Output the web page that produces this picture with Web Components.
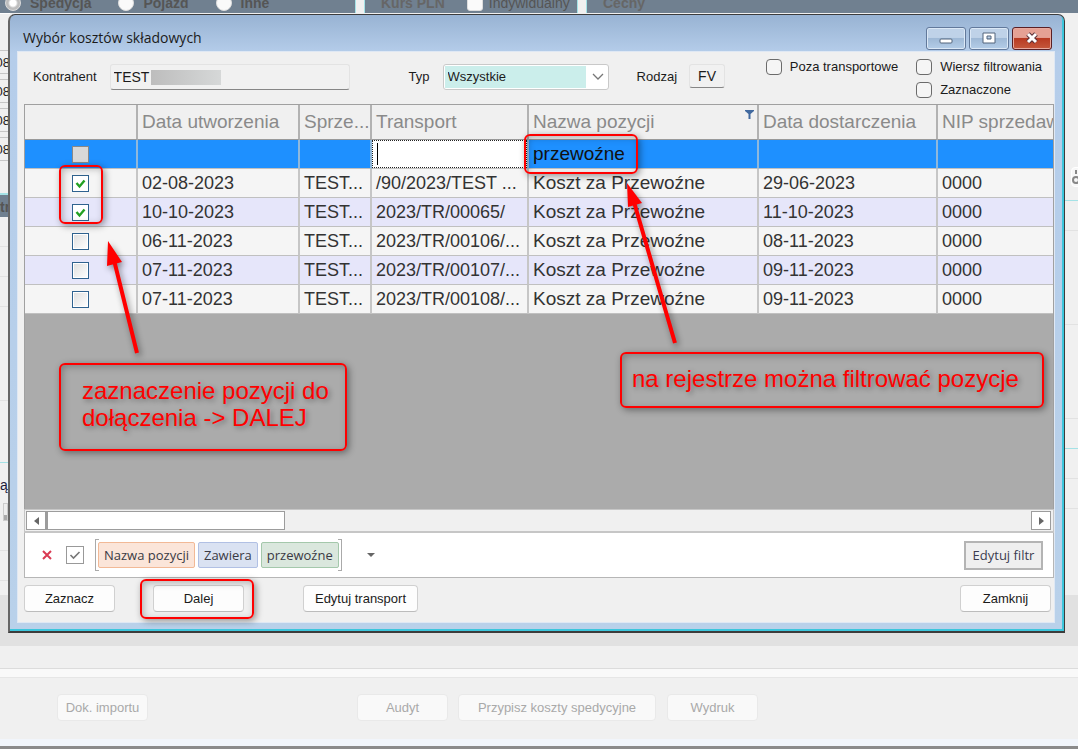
<!DOCTYPE html>
<html lang="pl">
<head>
<meta charset="utf-8">
<meta name="viewport" content="width=device-width, initial-scale=1">
<title>Wybór kosztów składowych</title>
<style>
  html, body { margin: 0; min-height: 100%; background: #f0f0f0; }
  body { font: 13px/16px "Liberation Sans", Arial, sans-serif; color: #1b1b1b; overflow: hidden; }
</style>
</head>
<body>
<costs-screen></costs-screen>

<script>
const define = (name, html, setup) => {
  const template = document.createElement('template');
  template.innerHTML = html;
  customElements.define(name, class extends HTMLElement {
    constructor() {
      super();
      this.attachShadow({ mode: 'open' }).append(template.content.cloneNode(true));
    }
    connectedCallback() { if (setup) setup(this, this.shadowRoot); }
  });
};

/* Push button; kind="flat" for the square one, "off" for disabled */
define('ui-button', `
<style>
  :host { display: block; }
  button { box-sizing: border-box; width: 100%; min-width: 91px; height: 27px; padding: 0 7px; font: inherit; color: #1b1b1b;
    background: #fdfdfd; border: 1px solid #d0d0d0; border-bottom-color: #bcbcbc; border-radius: 4px; white-space: nowrap; }
  button:disabled { color: #a9a9a9; background: #f9f9f9; border-color: #e9e9e9; }
  :host([kind=flat]) button { min-width: 79px; height: 29px; padding: 0 5px; border: 2px solid #b4b4b4; border-radius: 0; background: #efefef; color: #3c3c50; }
</style>
<button type="button"><slot></slot></button>`, (host, root) => {
  root.querySelector('button').disabled = host.hasAttribute('off');
});

define('ui-check', `
<style>
  :host { display: block; }
  label { display: flex; align-items: center; gap: 8px; white-space: nowrap; }
  input { appearance: none; box-sizing: border-box; width: 16px; height: 16px; margin: 0; border: 1px solid #6b6b6b; border-radius: 4px; background: #f5f5f5; }
</style>
<label><input type="checkbox"><slot></slot></label>`);

/* Toolbar of the window behind the dialog */
define('order-toolbar', `
<style>
  :host { display: grid; grid-template-columns: 356px 214px 1fr; gap: 8px; height: 13px; overflow: hidden; color: #555; font-size: 14px; }
  .group { display: flex; align-items: flex-end; box-sizing: border-box; height: 13px; background: #708090; border-right: 1px solid #a4e2e6; overflow: hidden; }
  .group + .group { border-left: 1px solid #a4e2e6; }
  .group:last-child { border-right: 0; }
  label, b { display: flex; align-items: center; gap: 9px; height: 20px; white-space: nowrap; }
  b, .bold { font-weight: bold; }
  input { appearance: none; box-sizing: border-box; width: 16px; height: 16px; margin: 0; background: #fafafa; border: 1px solid #ddd; border-radius: 3px; }
  [type=radio] { border-radius: 50%; }
  [type=radio]:checked { background: radial-gradient(#fff 3px, #bdbdbd 5px); }
  .first { padding-left: 5px; gap: 27px; }
  .second { padding-left: 16px; gap: 22px; }
  .second label { gap: 6px; }
  .third { padding-left: 16px; }
  .pale { color: #666; }
</style>
<div class="group first">
  <label class="bold"><input type="radio" name="kind" checked>Spedycja</label>
  <label class="bold"><input type="radio" name="kind">Pojazd</label>
  <label class="bold"><input type="radio" name="kind">Inne</label>
</div>
<div class="group second"><b class="pale">Kurs PLN</b><label><input type="checkbox">Indywidualny</label></div>
<div class="group third"><b class="pale">Cechy</b></div>`);

/* Slivers of the form that show on both sides of the dialog */
define('order-edges', `
<style>
  :host { display: flex; justify-content: space-between; height: 582px; }
  .side { overflow: hidden; display: flex; flex-direction: column; white-space: nowrap; }
  .left { width: 10px; border-top: 1px solid #fff; padding-top: 36px; box-sizing: border-box; }
  .right { width: 13px; }
  .field { display: flex; justify-content: flex-end; box-sizing: border-box; height: 24px; flex: none; margin-bottom: 5px; border: 1px solid #c6c6c6; border-width: 1px 0; line-height: 24px; color: #222; font-size: 13px; }
  .head { height: 22px; flex: none; background: #708090; color: #555; font: bold 14px/24px "Liberation Sans", sans-serif; border-top: 2px solid #a4e2e6; margin-top: 27px; }
  .gap { box-sizing: border-box; border-bottom: 1px solid #e2e2e2; flex: none; }
  .h30 { height: 30px; }
  .h62 { height: 62px; }
  .h94 { height: 94px; }
  .teal { border-bottom-color: #a4e2e6; }
  .label { color: #1b1b3c; font-size: 14px; line-height: 44px; height: 40px; flex: none; }
  .btn { width: 5px; height: 18px; align-self: flex-end; flex: none; background: linear-gradient(#eee 70%, #aaa 70%); border: 1px solid #ccc; box-sizing: border-box; margin-right: 2px; }
  .tool { display: flex; align-items: center; width: 26px; height: 18px; margin: 154px 0 13px 6px; border: 1px solid #fff; border-radius: 4px; background: #f7f7f7; flex: none; }
</style>
<div class="side left">
  <div class="field">08</div><div class="field">08</div><div class="field">08</div><div class="field">08</div>
  <div class="head">tr</div>
  <div class="gap h30"></div><div class="gap h30"></div><div class="gap h30"></div>
  <div class="gap h94"></div><div class="gap h62 teal"></div>
  <div class="label">ą</div><div class="btn"></div>
  <div class="gap h30"></div><div class="gap h30"></div>
</div>
<div class="side right">
  <div class="tool"><svg width="14" height="16" viewBox="0 0 14 16" fill="none" stroke="#888" stroke-width="2"><path d="M4 1v4M8 1v4"/><circle cx="4" cy="11" r="3"/><circle cx="10" cy="12" r="2"/></svg></div>
  <div class="gap teal"></div>
  <div class="gap h30"></div>
  <div class="gap h94"></div><div class="gap h94"></div>
  <div class="gap h30 teal"></div><div class="gap h30"></div><div class="gap h30"></div>
</div>`);

define('order-footer', `
<style>
  :host { display: block; background: #e1e1e1; padding-top: 51px; }
  .band { height: 22px; background: #f0f0f0; border-bottom: 1px solid #dcdcdc; }
  .light { height: 8px; background: #f9f9f9; border-bottom: 1px solid #e6e6e6; }
  .row { display: flex; background: #f0f0f0; padding: 16px 57px 18px; height: 27px; }
  .audit { margin-left: 209px; }
  .assign { margin-left: 10px; width: 198px; }
  .print { margin-left: 11px; }
  .end { height: 7px; background: #f1f5fb; border-bottom: 3px solid #8b8b8b; }
</style>
<div class="band"></div><div class="light"></div>
<div class="row">
  <ui-button off>Dok. importu</ui-button>
  <ui-button off class="audit">Audyt</ui-button>
  <ui-button off class="assign">Przypisz koszty spedycyjne</ui-button>
  <ui-button off class="print">Wydruk</ui-button>
</div>
<div class="end"></div>`);

define('dialog-title', `
<style>
  :host { display: flex; align-items: center; height: 36px; padding: 0 2px 0 5px; font: 14px/18px "Open Sans", "Noto Sans", sans-serif; }
  h1 { flex: 1; margin: 8px 0 0; font: inherit; }
  div { display: flex; gap: 3px; margin-top: 8px; }
  button { box-sizing: border-box; width: 40px; height: 23px; padding: 0; display: grid; place-items: center;
    border: 1px solid #62799b; border-radius: 3px; box-shadow: inset 0 0 0 1px #dbe8f6; background: linear-gradient(#bfd2e8 45%, #9fb9d6 50%, #b4cde8); }
  .close { border-color: #5a1f24; box-shadow: inset 0 0 0 1px #e8a99f; background: linear-gradient(#e5a194 45%, #b83a22 50%, #c5583d); }
</style>
<h1>Wybór kosztów składowych</h1>
<div>
  <button type="button" aria-label="Minimalizuj"><svg width="16" height="14"><rect x="2" y="8" width="12" height="4" rx="1" fill="#fff" stroke="#53657c"/></svg></button>
  <button type="button" aria-label="Maksymalizuj"><svg width="16" height="14"><path fill="#fff" fill-rule="evenodd" stroke="#53657c" d="M2 2h12v10H2zM6 5h4v3H6z"/></svg></button>
  <button type="button" class="close" aria-label="Zamknij okno"><svg width="16" height="14"><path d="M4 3l8 8M12 3l-8 8" stroke="#5a3038" stroke-width="5"/><path d="M4 3l8 8M12 3l-8 8" stroke="#fff" stroke-width="3"/></svg></button>
</div>`);

define('cost-criteria', `
<style>
  :host { display: flex; align-items: flex-start; height: 52px; padding: 0 12px 0 15px; box-sizing: border-box; }
  label { line-height: 26px; margin-top: 12px; white-space: nowrap; }
  .field { display: flex; align-items: center; box-sizing: border-box; height: 26px; margin-top: 12px; border: 1px solid #e3e3e3; border-bottom: 1px solid #868686; border-radius: 3px; background: #f1f1f1; }
  input, select { font: inherit; font-size: 14px; color: inherit; border: 0; background: none; padding: 0; margin: 0; min-width: 0; }
  .party { width: 240px; margin-left: 13px; padding-left: 3px; }
  .party input { width: 37px; }
  .mask { width: 70px; height: 15px; background: linear-gradient(90deg, #bdbdbd, #d6d8d8); }
  .type { width: 166px; margin-left: 13px; padding: 1px; border-color: #c9c9c9; background: #fff; position: relative; }
  select { appearance: none; width: 100%; height: 22px; padding-left: 3px; background: linear-gradient(90deg, #cbeeeb 141px, #fff 141px); font-size: 13px; }
  .type svg { position: absolute; right: 4px; top: 8px; pointer-events: none; }
  .kind { width: 36px; height: 24px; margin-left: 12px; }
  .kind input { width: 34px; text-align: center; }
  .t { margin-left: 59px; }
  .r { margin-left: 28px; }
  .checks { display: grid; grid-template-columns: auto auto; gap: 7px 18px; margin: 7px 0 0 auto; }
  .checks ui-check:last-child { grid-column: 2; }
</style>
<label for="party">Kontrahent</label>
<div class="field party"><input id="party" value="TEST"><span class="mask"></span></div>
<label class="t" for="type">Typ</label>
<div class="field type"><select id="type"><option>Wszystkie</option></select><svg width="12" height="8" fill="none" stroke="#777" stroke-width="1.3"><path d="M1 1l5 5 5-5"/></svg></div>
<label class="r" for="kind">Rodzaj</label>
<div class="field kind"><input id="kind" value="FV"></div>
<div class="checks"><ui-check>Poza transportowe</ui-check><ui-check>Wiersz filtrowania</ui-check><ui-check>Zaznaczone</ui-check></div>`);

define('cost-grid', `
<style>
  :host { display: block; min-height: 405px; box-sizing: border-box; background: #ababab; border: 1px solid #a0a0a0; border-bottom: 0; overflow: hidden; font-size: 18px; color: #333; }
  table { width: 100%; table-layout: fixed; border-collapse: separate; border-spacing: 0; }
  .c0 { width: 113px; } .c1 { width: 162px; } .c2 { width: 72px; } .c3 { width: 157px; } .c4 { width: 230px; } .c5 { width: 179px; }
  th, td { box-sizing: border-box; padding: 0 0 0 4px; text-align: left; font-weight: normal; white-space: nowrap; overflow: hidden; border-right: 2px solid #c6c6c6; border-bottom: 1px solid #c0c0c0; }
  th:last-child, td:last-child { border-right: 0; }
  th { height: 35px; font-size: 19px; color: #8a8a8a; background: #f0f0f0; border-right-color: #b2b2b2; border-bottom-color: #999; position: relative; }
  th svg { position: absolute; right: 3px; top: 5px; }
  td { height: 29px; background: #f5f5f5; line-height: 28px; }
  td:nth-child(5) { font-size: 19px; }
  td:first-child { padding: 0; }
  tbody tr:nth-child(odd) td { background: #e6e6fa; }
  tbody tr.filter td { background: #1e90ff; color: #111; border-right-color: #8fb8dc; }
  .filter input[type=text] { box-sizing: border-box; display: block; width: 100%; height: 28px; padding: 0 4px; margin: 0; border: 1px dotted #222; background: #fff; font: inherit; outline: 0; }
  tbody tr.filter td.edit { padding: 0; background: #fff; }
  .edit div { display: grid; align-items: center; }
  .edit input, .caret { grid-area: 1 / 1; }
  .caret { width: 1px; height: 22px; margin-left: 5px; background: #000; }
  [type=checkbox] { appearance: none; box-sizing: border-box; display: block; width: 17px; height: 17px; margin: 0 auto; border: 1px solid #2f628f; background: linear-gradient(135deg, #dedede, #fff); box-shadow: inset 0 0 0 1px #fff; }
  .filter [type=checkbox] { border-color: #888; background: #d8d8d8; box-shadow: none; }
  [type=checkbox]:checked { background: #fff url("data:image/svg+xml,%3Csvg xmlns='http://www.w3.org/2000/svg' viewBox='0 0 15 15'%3E%3Cpath d='M3.5 7l3 3.500 5-6' fill='none' stroke='%2322a022' stroke-width='2.400'/%3E%3C/svg%3E"); }
</style>
<table>
  <colgroup><col class="c0"><col class="c1"><col class="c2"><col class="c3"><col class="c4"><col class="c5"><col></colgroup>
  <thead><tr><th></th><th>Data utworzenia</th><th>Sprze...</th><th>Transport</th>
    <th>Nazwa pozycji<svg width="9" height="9" fill="#41699f"><path d="M0 0h9v1L5.500 4v5h-2V4L0 1z"/></svg></th>
    <th>Data dostarczenia</th><th>NIP sprzedawcy</th></tr></thead>
  <tbody>
    <tr class="filter"><td><input type="checkbox" aria-label="Zaznaczone"></td><td></td><td></td>
      <td class="edit"><div><input type="text" aria-label="Transport"><span class="caret"></span></div></td><td>przewoźne</td><td></td><td></td></tr>
  </tbody>
</table>`, (host, root) => {
  const rows = [
    [true, '02-08-2023', '/90/2023/TEST ...', '29-06-2023'],
    [true, '10-10-2023', '2023/TR/00065/', '11-10-2023'],
    [false, '06-11-2023', '2023/TR/00106/...', '08-11-2023'],
    [false, '07-11-2023', '2023/TR/00107/...', '09-11-2023'],
    [false, '07-11-2023', '2023/TR/00108/...', '09-11-2023']
  ];
  root.querySelector('tbody').insertAdjacentHTML('beforeend', rows.map(([on, made, transport, due]) =>
    `<tr><td><input type="checkbox" aria-label="Wybierz" ${on ? 'checked' : ''}></td><td>${made}</td><td>TEST...</td><td>${transport}</td><td>Koszt za Przewoźne</td><td>${due}</td><td>0000</td></tr>`).join(''));
});

define('grid-scrollbar', `
<style>
  :host { display: flex; box-sizing: border-box; height: 24px; padding: 1px 2px 1px 1px; background: #f0f0f0; border: 1px solid #c6c6c6; border-bottom-width: 2px; }
  button, .thumb { box-sizing: border-box; border: 1px solid #9c9c9c; background: #fff; height: 19px; padding: 0; }
  button { display: grid; place-items: center; width: 20px; flex: none; }
  .thumb { flex: none; width: 239px; border-left-width: 2px; }
  button:last-child { margin-left: auto; }
</style>
<button type="button" aria-label="W lewo"><svg width="5" height="8" fill="#666"><path d="M5 0v8L0 4z"/></svg></button>
<div class="thumb"></div>
<button type="button" aria-label="W prawo"><svg width="5" height="8" fill="#666"><path d="M0 0v8l5-4z"/></svg></button>`);

define('filter-bar', `
<style>
  :host { display: flex; align-items: center; box-sizing: border-box; height: 45px; padding: 0 10px 0 17px; background: #fff; border: 1px solid #b6b6b6; border-top: 0; color: #3c3c50; font-family: "Open Sans", "Noto Sans", sans-serif; }
  .drop, .more { border: 0; background: none; padding: 0; display: grid; }
  [type=checkbox] { appearance: none; box-sizing: border-box; width: 18px; height: 18px; margin: 0 11px 0 14px; border: 1px solid #999;
    background: url("data:image/svg+xml,%3Csvg xmlns='http://www.w3.org/2000/svg' viewBox='0 0 16 16'%3E%3Cpath d='M3.500 8l3 3 6-6' fill='none' stroke='%23777' stroke-width='1.600'/%3E%3C/svg%3E"); }
  .cond { display: flex; align-items: center; gap: 3px; height: 32px; padding: 0 3px; position: relative; }
  .cond::before, .cond::after { content: ""; position: absolute; top: 0; bottom: 0; width: 4px; border: 1px solid #aaa; box-sizing: border-box; }
  .cond::before { left: 0; border-right: 0; }
  .cond::after { right: 0; border-left: 0; }
  .chip { box-sizing: border-box; height: 26px; padding: 0 5px; border: 1px solid; border-radius: 2px; font: inherit; line-height: 24px; color: #3a3a44; white-space: nowrap; position: relative; z-index: 1; }
  .name { background: #fbe5d9; border-color: #f2b996; }
  .op { background: #dae2f2; border-color: #b1c0e4; }
  .val { background: #dae7dd; border-color: #a4c8ab; }
  .more { margin-left: 25px; }
  ui-button { margin-left: auto; }
</style>
<button type="button" class="drop" aria-label="Usuń filtr"><svg width="10" height="10" stroke="#d93a52" stroke-width="2"><path d="M1 1l8 8M9 1l-8 8"/></svg></button>
<input type="checkbox" aria-label="Filtr włączony">
<div class="cond"><button class="chip name">Nazwa pozycji</button><button class="chip op">Zawiera</button><button class="chip val">przewoźne</button></div>
<button type="button" class="more" aria-label="Ostatnie filtry"><svg width="8" height="4" fill="#666"><path d="M0 0h8L4 4z"/></svg></button>
<ui-button kind="flat">Edytuj filtr</ui-button>`);

define('dialog-actions', `
<style>
  :host { display: flex; padding: 7px 3px 10px 0; }
  .next { margin-left: 38px; }
  .edit { margin-left: 59px; width: 115px; }
  .close { margin-left: auto; }
</style>
<ui-button>Zaznacz</ui-button><ui-button class="next">Dalej</ui-button><ui-button class="edit">Edytuj transport</ui-button><ui-button class="close">Zamknij</ui-button>`);

define('costs-dialog', `
<style>
  :host { display: block; border: 1px solid #3c3c3c; border-left: 2px solid #666; border-bottom-width: 2px; border-radius: 7px 7px 0 0;
    background: linear-gradient(#98b3d3, #b5cdea 38px, #b9d1ea); box-shadow: inset -2px -2px 0 #3cc6dc; padding: 1px 10px 9px 8px; }
  .body { background: #f0f0f0; box-shadow: 0 0 0 1px #dfe8f4; }
  .main { padding: 0 0 0 6px; }
</style>
<dialog-title></dialog-title>
<div class="body">
  <cost-criteria></cost-criteria>
  <div class="main"><cost-grid></cost-grid><grid-scrollbar></grid-scrollbar><filter-bar></filter-bar><dialog-actions></dialog-actions></div>
</div>`);

/* Red frame with an optional note, placed over the window */
define('call-out', `
<style>
  :host { display: block; position: absolute; box-sizing: border-box; border: 2px solid #f00; border-radius: 6px;
    box-shadow: 2px 2px 7px rgba(0,0,0,.4), inset 2px 2px 7px rgba(0,0,0,.25);
    font: 24px/27px "Liberation Sans", Arial, sans-serif; color: #f00; text-shadow: 2px 2px 5px rgba(0,0,0,.35); }
</style>
<slot></slot>`);

define('costs-screen', `
<style>
  :host { display: block; position: relative; min-height: 100vh; background: #f0f0f0; }
  costs-dialog { position: absolute; top: 14px; left: 8px; right: 13px; }
  .rows { left: 59px; top: 165px; width: 44px; height: 59px; }
  .value { left: 524px; top: 134px; width: 114px; height: 40px; }
  .next { left: 140px; top: 579px; width: 114px; height: 40px; }
  .pick { left: 59px; top: 363px; width: 288px; height: 88px; padding: 12px 12px 12px 21px; }
  .find { left: 620px; top: 352px; width: 424px; height: 56px; padding: 11px 10px; white-space: nowrap; }
  .arrows { position: absolute; left: 0; top: 0; width: 700px; height: 400px; pointer-events: none; filter: drop-shadow(2px 3px 3px rgba(0,0,0,.45)); }
</style>
<order-toolbar></order-toolbar>
<order-edges></order-edges>
<order-footer></order-footer>
<costs-dialog></costs-dialog>
<call-out class="rows"></call-out>
<call-out class="value"></call-out>
<call-out class="next"></call-out>
<call-out class="pick">zaznaczenie pozycji do<br>dołączenia -&gt; DALEJ</call-out>
<call-out class="find">na rejestrze można filtrować pozycje</call-out>
<svg class="arrows" viewBox="0 0 700 400" fill="#f00" stroke="#f00">
  <path d="M114 260L137 353M634 202L675 343" stroke-width="4"/>
  <path d="M108 241l-1 25 15-4zM627 183l1 24 14-4z" stroke="none"/>
</svg>`);
</script>
</body>
</html>
